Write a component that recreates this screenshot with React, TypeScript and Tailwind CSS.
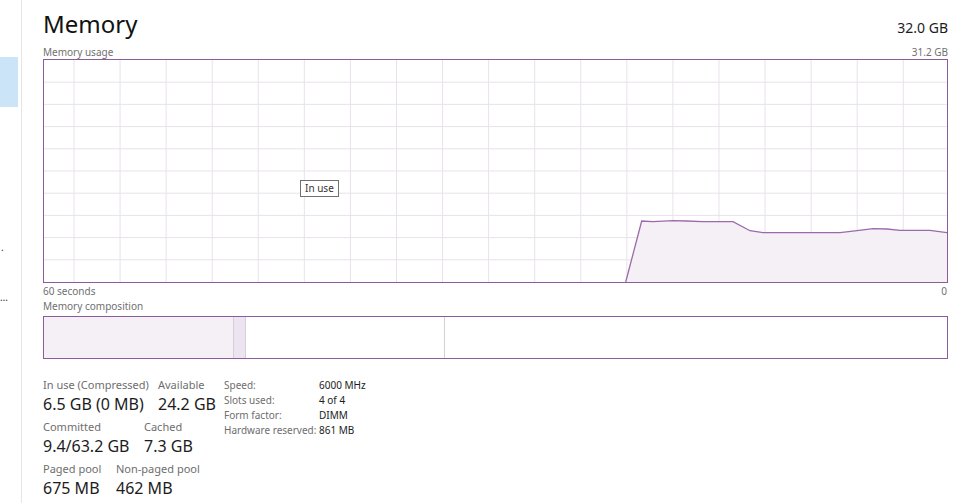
import React from "react";

const FONT = { fontFamily: '"Noto Sans", "Open Sans", sans-serif' };

// usage samples in chart space (903 x 222)
const usage: [number, number][] = [
  [581.7, 222],
  [597.7, 161],
  [609, 161.7],
  [629, 160.7],
  [642.7, 161],
  [659, 161.7],
  [689, 161.7],
  [706, 170.7],
  [719, 172.7],
  [796, 172.7],
  [813, 170.7],
  [829, 168.7],
  [843, 169],
  [856, 170.3],
  [886, 170.3],
  [903, 172.7],
];

const UsageChart = () => {
  const w = 903;
  const h = 222;
  const vLines = Array.from({ length: 19 }, (_, i) => 30 + i * 46.07);
  const hLines = Array.from({ length: 9 }, (_, i) => (i + 1) * 22.2);
  const line = usage.map(([x, y]) => `${x},${y}`).join(" ");
  const area = `${usage[0][0]},${h} ${line} ${w},${h}`;

  return (
    <svg width={w} height={h} viewBox={`0 0 ${w} ${h}`} className="block">
      {vLines.map((x) => (
        <line key={`v${x}`} x1={x} y1={0} x2={x} y2={h} stroke="#e9e2eb" strokeWidth={1} />
      ))}
      {hLines.map((y) => (
        <line key={`h${y}`} x1={0} y1={y} x2={w} y2={y} stroke="#e9e2eb" strokeWidth={1} />
      ))}
      <polygon points={area} fill="#f4f0f6" />
      <polyline points={line} fill="none" stroke="#9c6aab" strokeWidth={1.3} />
    </svg>
  );
};

const Stat = ({ label, value, w }: { label: string; value: string; w: string }) => (
  <div className={`flex flex-col ${w}`}>
    <span className="text-[11px] leading-[14px] text-[#6e6e6e] whitespace-nowrap">{label}</span>
    <span className="text-[16px] leading-[24px] text-[#1c1c1c] whitespace-nowrap">{value}</span>
  </div>
);

const specs = [
  ["Speed:", "6000 MHz"],
  ["Slots used:", "4 of 4"],
  ["Form factor:", "DIMM"],
  ["Hardware reserved:", "861 MB"],
];

export default function App() {
  return (
    <div className="flex w-[960px] h-[503px] overflow-hidden bg-white" style={FONT}>
      {/* left nav strip, mostly cut off */}
      <div className="flex flex-col w-[22px] shrink-0 border-r border-[#e6e6e6]">
        <div className="h-[57px]" />
        <div className="h-[50px] w-[18px] bg-[#cce4f7]" />
        <div className="h-[134px]" />
        <span className="text-[10px] leading-[12px] text-[#333] pl-[1px]">.</span>
        <div className="h-[38px]" />
        <span className="text-[10px] leading-[12px] text-[#333]">…</span>
      </div>

      <div className="flex flex-col flex-1 pl-[21px] pr-[13px]">
        <div className="flex items-baseline justify-between h-[46px] pt-[8px]">
          <h1 className="text-[24px] leading-[32px] text-[#111]">Memory</h1>
          <span className="text-[14px] text-[#1c1c1c]">32.0 GB</span>
        </div>
        <div className="flex justify-between text-[10px] leading-[14px] text-[#707070] -mt-[1px]">
          <span>Memory usage</span>
          <span>31.2 GB</span>
        </div>

        <div className="relative border border-[#8d5b9c] w-[905px] h-[224px]">
          <UsageChart />
          <div className="absolute left-[256px] top-[120px] border border-[#707070] bg-white px-[4px] text-[10px] leading-[15px] text-[#333]">
            In use
          </div>
        </div>

        <div className="flex justify-between text-[10px] leading-[14px] text-[#707070] pt-[1px]">
          <span>60 seconds</span>
          <span className="pr-[1px]">0</span>
        </div>
        <div className="text-[10px] leading-[14px] text-[#707070] pt-[1px]">Memory composition</div>

        <div className="flex mt-[3px] border border-[#8d5b9c] w-[905px] h-[43px]">
          <div className="w-[189px] bg-[#f4f0f6]" />
          <div className="w-[13px] bg-[#ece4ef] border-x border-[#d9cbe0]" />
          <div className="w-[199px] border-r border-[#d4d0d6]" />
          <div className="flex-1" />
        </div>

        <div className="flex mt-[19px]">
          <div className="flex flex-col gap-[4px] w-[181px]">
            <div className="flex">
              <Stat label="In use (Compressed)" value="6.5 GB (0 MB)" w="w-[115px]" />
              <Stat label="Available" value="24.2 GB" w="w-[60px]" />
            </div>
            <div className="flex">
              <Stat label="Committed" value="9.4/63.2 GB" w="w-[101px]" />
              <Stat label="Cached" value="7.3 GB" w="w-[60px]" />
            </div>
            <div className="flex">
              <Stat label="Paged pool" value="675 MB" w="w-[73px]" />
              <Stat label="Non-paged pool" value="462 MB" w="w-[90px]" />
            </div>
          </div>
          <div className="flex flex-col">
            {specs.map(([k, v]) => (
              <div key={k} className="flex text-[10px] leading-[15px]">
                <span className="w-[95px] text-[#6e6e6e] whitespace-nowrap">{k}</span>
                <span className="text-[#1c1c1c] whitespace-nowrap">{v}</span>
              </div>
            ))}
          </div>
        </div>
      </div>
    </div>
  );
}
